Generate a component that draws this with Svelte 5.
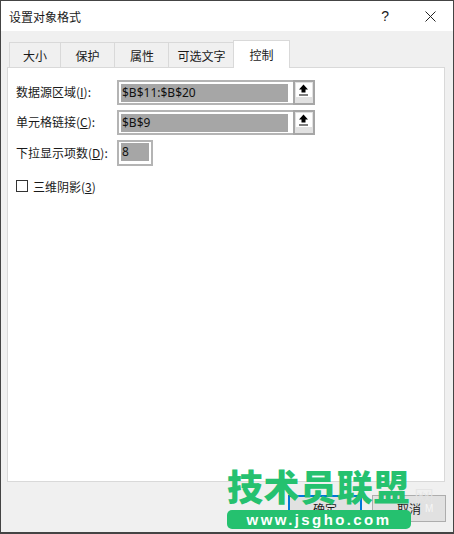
<script>
  const tabs = ['大小', '保护', '属性', '可选文字', '控制'];
</script>

<div class="dialog">
  <header class="titlebar">
    <span class="title">设置对象格式</span>
    <span class="help">?</span>
    <svg class="close" width="11" height="11" viewBox="0 0 11 11"><path d="M0.5 0.5L10.5 10.5M10.5 0.5L0.5 10.5" stroke="#222" fill="none" /></svg>
  </header>

  <div class="body">
    <div class="tabs">
      {#each tabs as tab, i}
        <div class="tab" class:active={i === 4}>{tab}</div>
      {/each}
    </div>

    <section class="panel">
      <div class="row">
        <span class="label">数据源区域(<u>I</u>):</span>
        <div class="field wide">
          <div class="inner"><div class="value">$B$11:$B$20</div></div>
          <div class="picker">
            <div class="face">
              <svg width="12" height="13" viewBox="0 0 12 13"><path d="M5.5 1.5L10 6.5H7.5V9.5H3.5V6.5H1Z" fill="#000" /><rect x="1" y="11.5" width="9" height="1" fill="#000" /></svg>
            </div>
          </div>
        </div>
      </div>
      <div class="row">
        <span class="label">单元格链接(<u>C</u>):</span>
        <div class="field wide">
          <div class="inner"><div class="value">$B$9</div></div>
          <div class="picker">
            <div class="face">
              <svg width="12" height="13" viewBox="0 0 12 13"><path d="M5.5 1.5L10 6.5H7.5V9.5H3.5V6.5H1Z" fill="#000" /><rect x="1" y="11.5" width="9" height="1" fill="#000" /></svg>
            </div>
          </div>
        </div>
      </div>
      <div class="row">
        <span class="label">下拉显示项数(<u>D</u>):</span>
        <div class="field small">
          <div class="inner"><div class="value">8</div></div>
        </div>
      </div>
      <div class="check">
        <span class="box"></span>
        <span>三维阴影(<u>3</u>)</span>
      </div>
    </section>

    <footer class="buttons">
      <div class="btn primary">确定</div>
      <div class="btn">取消</div>
    </footer>
  </div>

  <div class="mark">
    <span class="net">网</span>
    <span class="ghost">M</span>
    <div class="mark-name">技术员联盟</div>
    <div class="mark-url">www.jsgho.com</div>
  </div>
</div>

<style>
  :global(body) {
    margin: 0;
  }

  .dialog {
    position: relative;
    width: 454px;
    height: 534px;
    box-sizing: border-box;
    border: 1px solid #444;
    border-bottom-width: 2px;
    background: #f0f0f0;
    font-family: "Noto Sans CJK SC", "Liberation Sans", sans-serif;
    font-size: 12px;
    color: #1a1a1a;
    overflow: hidden;
  }

  .titlebar {
    height: 30px;
    background: #fff;
    display: flex;
    align-items: center;
    padding: 0 17px 0 8px;
  }

  .title {
    flex: 1;
  }

  .help {
    font-family: "Liberation Sans", sans-serif;
    font-size: 14px;
    margin-right: 36px;
  }

  .body {
    padding: 9px 8px 0 6px;
  }

  .tabs {
    display: flex;
    padding-left: 2px;
    height: 27px;
    align-items: flex-end;
  }

  .tab {
    height: 25px;
    box-sizing: border-box;
    border: 1px solid #d9d9d9;
    border-bottom: none;
    border-right: none;
    width: 54px;
    text-align: center;
    line-height: 25px;
    white-space: nowrap;
  }

  .tab:first-child {
    width: 51px;
  }

  .tab:nth-child(3),
  .tab:nth-child(4) {
    padding-left: 1px;
  }

  .tab:nth-child(4) {
    width: 65px;
  }

  .tab.active {
    height: 28px;
    width: 57px;
    margin-bottom: -1px;
    background: #fff;
    border-right: 1px solid #d9d9d9;
    position: relative;
    z-index: 1;
    line-height: 27px;
  }

  .panel {
    height: 415px;
    box-sizing: border-box;
    background: #fff;
    border: 1px solid #d9d9d9;
    padding: 12px 8px 0 8px;
  }

  .row {
    display: flex;
    align-items: flex-start;
    height: 25px;
    margin-bottom: 5px;
  }

  .row:nth-child(3) {
    height: 26px;
    margin-bottom: 0;
  }

  .label {
    width: 101px;
    white-space: nowrap;
    flex: none;
    line-height: 24px;
  }

  .row:nth-child(3) .label {
    line-height: 26px;
  }

  u {
    text-underline-offset: 1px;
  }

  .field {
    display: flex;
    box-sizing: border-box;
    height: 100%;
  }

  .wide {
    width: 198px;
  }

  .small {
    width: 36px;
  }

  .inner {
    flex: 1;
    display: flex;
    box-sizing: border-box;
    border: 2px solid #b4b4b4;
    border-right: none;
    background: #fff;
    padding: 2px 5px 1px 2px;
  }

  .small .inner {
    border-right: 2px solid #b4b4b4;
    padding: 1px 2px 3px 2px;
  }

  .value {
    flex: 1;
    padding-left: 1px;
    background: #a6a6a6;
    color: #111;
    font-family: "Noto Sans", sans-serif;
    font-size: 12px;
    line-height: 18px;
  }

  .picker {
    width: 22px;
    flex: none;
    box-sizing: border-box;
    background: #e1e1e1;
    border: 2px solid #a6a6a6;
    padding: 1px 1px 0 1px;
  }

  .face {
    height: 14px;
    background: #fff;
    display: flex;
    justify-content: center;
  }

  .check {
    display: flex;
    align-items: center;
    gap: 5px;
    margin-top: 12px;
    height: 16px;
  }

  .box {
    width: 10px;
    height: 10px;
    border: 1px solid #333;
    background: #fff;
  }

  .buttons {
    display: flex;
    justify-content: flex-end;
    gap: 10px;
    padding-top: 13px;
    margin-right: -1px;
  }

  .btn {
    width: 74px;
    height: 27px;
    box-sizing: border-box;
    border: 1px solid #adadad;
    background: #e1e1e1;
    text-align: center;
    line-height: 25px;
  }

  .primary {
    border: 2px solid #0078d7;
    line-height: 23px;
  }

  .mark {
    position: absolute;
    left: 226px;
    top: 464px;
    width: 186px;
    height: 64px;
  }

  .mark-name {
    font-family: "Noto Sans CJK SC", sans-serif;
    font-weight: 900;
    font-size: 36px;
    line-height: 40px;
    letter-spacing: 0.6px;
    color: #25c16f;
    white-space: nowrap;
  }

  .mark-url {
    position: absolute;
    left: 0;
    top: 45px;
    width: 184px;
    height: 19px;
    border-radius: 5px;
    background: #25c16f;
    color: #fff;
    font-family: "Liberation Sans", sans-serif;
    font-weight: 700;
    font-size: 15px;
    letter-spacing: 2.4px;
    line-height: 19px;
    text-align: center;
  }

  .net {
    position: absolute;
    left: 187px;
    top: 17px;
    font-size: 20px;
    font-weight: 300;
    color: #e4e4e4;
  }

  .ghost {
    position: absolute;
    left: 198px;
    top: 38px;
    font-family: "Liberation Sans", sans-serif;
    font-size: 10px;
    color: #f6f6f6;
  }
</style>
